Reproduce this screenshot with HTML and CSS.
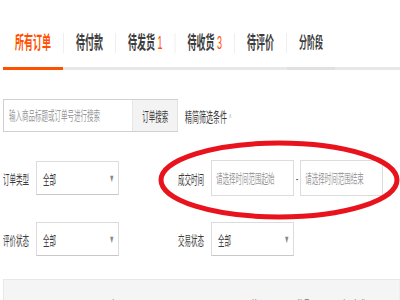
FILE: index.html
```html
<!DOCTYPE html>
<html lang="zh-CN">
<head>
  <meta charset="UTF-8" />
  <title>已买到的宝贝</title>
  <link rel="stylesheet" href="styles.css">
</head>
<body>

  <div class="page">
    <!-- tabs -->
    <div class="tabs">
      <a class="tab active">所有订单</a>
      <i class="sep"></i>
      <a class="tab">待付款</a>
      <i class="sep"></i>
      <a class="tab">待发货<em class="num">1</em></a>
      <i class="sep"></i>
      <a class="tab">待收货<em class="num">3</em></a>
      <i class="sep"></i>
      <a class="tab">待评价</a>
      <i class="sep"></i>
      <a class="tab small">分阶段</a>
    </div>

    <!-- search -->
    <div class="search">
      <input class="search-input" type="text" placeholder="输入商品标题或订单号进行搜索">
      <button class="search-btn">订单搜索</button>
      <span class="toggle">精简筛选条件<span class="caret">^</span></span>
    </div>

    <!-- filters -->
    <div class="filters">
      <div class="field">
        <label>订单类型</label>
        <div class="select">全部<span class="arrow">▼</span></div>
      </div>
      <div class="field">
        <label>成交时间</label>
        <input class="date" type="text" placeholder="请选择时间范围起始">
        <span class="dash">-</span>
        <input class="date" type="text" placeholder="请选择时间范围结束">
      </div>
      <div class="field">
        <label>评价状态</label>
        <div class="select">全部<span class="arrow">▼</span></div>
      </div>
      <div class="field">
        <label>交易状态</label>
        <div class="select">全部<span class="arrow">▼</span></div>
      </div>
    </div>

    <!-- table head -->
    <div class="thead">
      <span class="col-item">宝贝</span>
      <span class="col-price">单价</span>
      <span class="col-qty">数量</span>
      <span class="col-op">商品操作</span>
    </div>
  </div>

  <!-- red hand-drawn circle -->
  <svg class="mark" width="242" height="86" viewBox="0 0 242 86">
    <ellipse cx="121" cy="41" rx="118" ry="37" fill="none" stroke="#e8131c" stroke-width="5" />
  </svg>

</body>
</html>
```

FILE: styles.css
```css
html, body {
  overflow: hidden;
}

body {
  margin: 0;
  background: #fff;
  font-family: "Liberation Sans", "Noto Sans CJK SC", sans-serif;
  color: #3c3c3c;
}

/* the screenshot is squeezed sideways */
.page {
  width: 800px;
  height: 600px;
  overflow: hidden;
  padding-left: 6px;
  box-sizing: border-box;
  transform: scaleX(0.5);
  transform-origin: 0 0;
}

/* tabs */
.tabs {
  display: flex;
  border-bottom: 3px solid #e8e8e8;
}

.tab {
  padding: 32px 24px 13px;
  line-height: 22px;
  font-size: 18px;
  font-weight: bold;
  color: #3c3c3c;
}

.tab.active {
  color: #ff5000;
  border-bottom: 3px solid #ff5000;
  margin-bottom: -3px;
}

.tab.small {
  font-size: 16px;
  border-bottom: 3px solid #e0e0e0;
  margin-bottom: -3px;
}

.tab .num {
  font-style: normal;
  font-weight: normal;
  color: #ff5000;
  margin-left: 5px;
}

.sep {
  width: 2px;
  height: 20px;
  margin-top: 33px;
  background: #efefef;
  align-self: flex-start;
}

/* search */
.search {
  display: flex;
  align-items: center;
  margin-top: 29px;
  font-size: 13px;
}

.search-input {
  width: 260px;
  height: 33px;
  box-sizing: border-box;
  border: 1px solid #d0d0d0;
  border-left-width: 2px;
  padding: 0 10px;
  font-family: inherit;
  font-size: 13px;
  outline: none;
}

.search-input::placeholder,
.date::placeholder {
  color: #9a9a9a;
}

.search-btn {
  width: 90px;
  height: 33px;
  border: 1px solid #d0d0d0;
  border-left: none;
  background: #f3f3f3;
  font-family: inherit;
  font-size: 13px;
  color: #3c3c3c;
}

.toggle {
  margin-left: 14px;
  font-size: 14px;
  color: #3c3c3c;
}

.caret {
  font-size: 10px;
  color: #aaa;
  margin-left: 4px;
}

/* filters */
.filters {
  display: grid;
  grid-template-columns: 350px 1fr;
  row-gap: 26px;
  margin-top: 28px;
  font-size: 13px;
}

.field {
  display: flex;
  align-items: center;
}

.field label {
  width: 52px;
  margin-right: 14px;
}

.select {
  width: 166px;
  height: 34px;
  box-sizing: border-box;
  border: 1px solid #dcdcdc;
  border-left-width: 2px;
  border-right-width: 2px;
  border-bottom-color: #c8c8c8;
  padding: 0 7px 0 12px;
  display: flex;
  align-items: center;
  justify-content: space-between;
  color: #3c3c3c;
}

.arrow {
  font-size: 11px;
  color: #8a8a8a;
}

.date {
  width: 166px;
  height: 36px;
  box-sizing: border-box;
  border: 1px solid #dcdcdc;
  border-left-width: 2px;
  border-right-width: 2px;
  padding: 0 8px;
  font-family: inherit;
  font-size: 13px;
  outline: none;
}

.dash {
  margin: 0 4px;
  color: #3c3c3c;
}

/* table head */
.thead {
  display: grid;
  grid-template-columns: 494px 92px 88px 1fr;
  margin-top: 23px;
  height: 40px;
  padding: 15px 0 0 0;
  box-sizing: border-box;
  background: #f5f5f5;
  border: 1px solid #e8e8e8;
  border-left-width: 2px;
  font-size: 13px;
  color: #3c3c3c;
}

.col-item {
  padding-left: 212px;
}

/* annotation */
.mark {
  position: absolute;
  left: 158px;
  top: 139px;
}
```
